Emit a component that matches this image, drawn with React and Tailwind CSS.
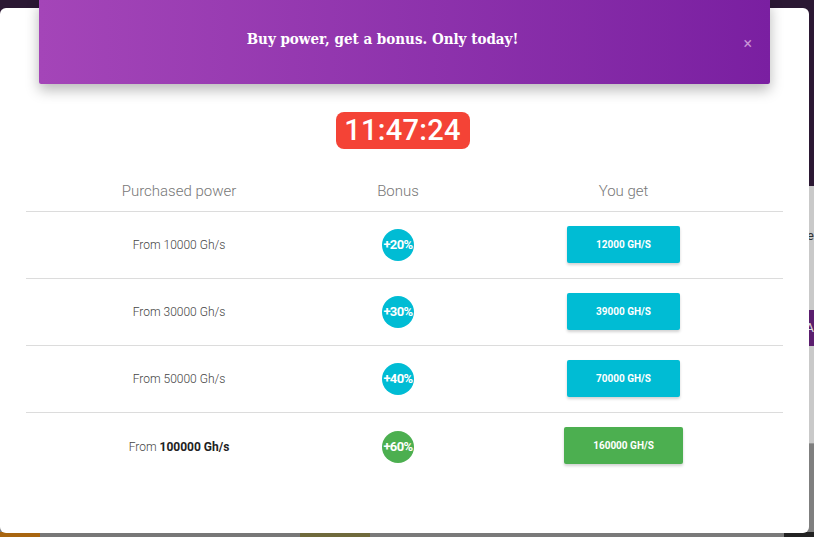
import React from 'react';

const rows = [
  { from: '10000', get: '12000 GH/S', bonus: '+20%' },
  { from: '30000', get: '39000 GH/S', bonus: '+30%' },
  { from: '50000', get: '70000 GH/S', bonus: '+40%' },
  { from: '100000', get: '160000 GH/S', bonus: '+60%', best: true },
];

const BonusRow = ({ row, last }) => (
  <div className={`grid grid-cols-[306px_132px_1fr] items-center h-[67px] ${last ? '' : 'border-b border-[#dcdcdc]'}`}>
    <div className="text-center text-[12px] font-light text-[#444]">
      From {row.best ? <b className="font-bold text-[#222]">{row.from} Gh/s</b> : `${row.from} Gh/s`}
    </div>
    <div className="flex justify-center">
      <div
        className={`w-[32px] h-[32px] rounded-full flex items-center justify-center text-[13px] font-bold text-white tracking-[-0.6px] whitespace-nowrap ${
          row.best ? 'bg-[#4caf50]' : 'bg-[#00bcd4]'
        }`}
      >
        {row.bonus}
      </div>
    </div>
    <div className="flex justify-center pb-[2px]">
      <button
        className={`h-[37px] rounded-[2px] text-[10px] font-bold text-white shadow-[0_2px_3px_rgba(0,0,0,0.18)] ${
          row.best ? 'w-[119px] bg-[#4caf50]' : 'w-[113px] bg-[#00bcd4]'
        }`}
      >
        {row.get}
      </button>
    </div>
  </div>
);

export default function App() {
  return (
    <div className="relative w-[814px] h-[537px] overflow-hidden bg-[#8a8a8a] font-['Roboto',sans-serif]">
      {/* page behind the overlay */}
      <div className="flex flex-col h-full">
        <div className="h-[186px] bg-[#2b1833]" />
        <div className="flex-1 bg-[#c9c9c9] flex flex-col">
          <div className="h-[30px]" />
          <div className="h-[40px] flex justify-end items-center text-[13px] text-[#333]">e</div>
          <div className="h-[54px]" />
          <div className="h-[36px] bg-[#5a1d6e] flex justify-end items-center text-[13px] text-[#ddd]">A</div>
          <div className="h-[98px] border-b border-[#999]" />
          <div className="flex-1 bg-[#7f7f7f]" />
        </div>
        <div className="h-[5px] flex">
          <div className="w-[40px] bg-[#a8650f]" />
          <div className="w-[260px] bg-[#777]" />
          <div className="w-[70px] bg-[#6f6a3c]" />
          <div className="flex-1 bg-[#7a7a7a]" />
          <div className="w-[30px] bg-[#222]" />
        </div>
      </div>

      {/* modal */}
      <div className="absolute left-0 top-[8px] w-[809px] h-[525px] bg-white rounded-[6px]">
        <div className="absolute left-[39px] top-[-8px] w-[731px] h-[84px] bg-gradient-to-r from-[#a445b8] to-[#7a1fa1] shadow-[0_6px_14px_rgba(0,0,0,0.28)] rounded-b-[2px] flex items-center justify-center">
          <h2 className="font-['DejaVu_Serif_Condensed','DejaVu_Serif',serif] font-bold text-[15px] text-white pr-[44px] pb-[6px]">
            Buy power, get a bonus. Only today!
          </h2>
          <span className="absolute right-[18px] top-[36px] text-[#c893d6] text-[16px] leading-none">×</span>
        </div>

        <div className="pt-[104px] flex justify-center">
          <div className="mr-[4px] w-[134px] h-[37px] bg-[#f44336] rounded-[8px] flex items-center justify-center text-white text-[29px] font-medium leading-none tracking-[0.3px]">
            11:47:24
          </div>
        </div>

        <div className="mx-[26px] w-[757px] mt-[17px]">
          <div className="grid grid-cols-[306px_132px_1fr] h-[46px] pt-[5px] items-center border-b border-[#dcdcdc] text-[15px] font-light text-[#777] text-center">
            <div>Purchased power</div>
            <div>Bonus</div>
            <div>You get</div>
          </div>
          {rows.map((row, i) => (
            <BonusRow key={row.from} row={row} last={i === rows.length - 1} />
          ))}
        </div>
      </div>
    </div>
  );
}
